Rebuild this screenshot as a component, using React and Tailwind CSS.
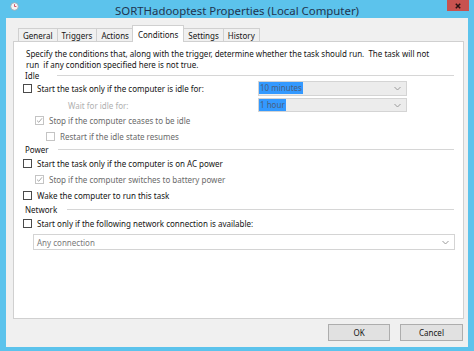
import React from 'react';

const font = { fontFamily: '"Noto Sans", "Open Sans", sans-serif' };

const Check = ({ checked, disabled }) => (
  <span
    className={`w-[9px] h-[9px] shrink-0 border bg-white flex items-center justify-center ${
      disabled ? 'border-[#c4c4c4]' : 'border-[#4a4a4a]'
    }`}
  >
    {checked && (
      <svg width="7" height="7" viewBox="0 0 7 7">
        <path d="M1 3.6 L2.8 5.3 L6 1.3" fill="none" stroke={disabled ? '#a8a8a8' : '#333'} strokeWidth="1" />
      </svg>
    )}
  </span>
);

const Chevron = () => (
  <svg width="7" height="5" viewBox="0 0 7 5">
    <path d="M0.5 1 L3.5 4 L6.5 1" fill="none" stroke="#9a9a9a" strokeWidth="1" />
  </svg>
);

const Row = ({ className = '', checked, disabled, label, children }) => (
  <div className={`h-[14px] flex items-center ${className}`}>
    <Check checked={checked} disabled={disabled} />
    <span className={`ml-[5px] whitespace-nowrap ${disabled ? 'text-[#6a6a6a]' : 'text-[#141414]'}`}>{label}</span>
    {children}
  </div>
);

const Section = ({ label, w, className = '' }) => (
  <div className={`flex items-center ${className}`}>
    <span className={`ml-[2px] ${w} text-[#141414]`}>{label}</span>
    <span className="flex-1 h-px bg-[#d6d6d6] mr-[9px]" />
  </div>
);

const IdleCombo = ({ value, h }) => (
  <div className={`ml-auto mr-[56px] w-[149px] ${h} border border-[#d4d4d4] bg-[#ececec] flex items-center`}>
    <span className="bg-[#3399ff] text-[#4a5f80] px-[1px] leading-[12px]">{value}</span>
    <span className="ml-auto mr-[5px] flex"><Chevron /></span>
  </div>
);

export default function App() {
  const tabs = ['General', 'Triggers', 'Actions', 'Conditions', 'Settings', 'History'];
  return (
    <div className="w-[474px] h-[351px] bg-[#5cc3ec] flex flex-col text-[8px] leading-[11px] overflow-hidden" style={font}>
      {/* title bar */}
      <div className="h-[18px] flex items-start relative shrink-0">
        <svg className="absolute left-[10px] top-[2px]" width="9" height="9" viewBox="0 0 9 9">
          <circle cx="4.5" cy="4.5" r="3.8" fill="#f4f4f4" stroke="#9aa6b0" strokeWidth="0.8" />
          <path d="M4.5 2.2 V4.5 H6.4" fill="none" stroke="#d0405a" strokeWidth="0.9" />
        </svg>
        <div className="flex-1 text-center text-[11.4px] leading-[14px] pt-[4px] text-[#1f3550]">
          SORTHadooptest Properties (Local Computer)
        </div>
        <div className="absolute left-[447px] top-0 w-[22px] h-[11px] bg-[#c8524f] flex items-center justify-center">
          <svg width="6" height="6" viewBox="0 0 6 6">
            <path d="M0.8 0.8 L5.2 5.2 M5.2 0.8 L0.8 5.2" stroke="#2a1212" strokeWidth="1.5" />
          </svg>
        </div>
      </div>

      {/* client */}
      <div className="mx-[6px] mb-[4px] flex-1 bg-[#f0f0f0] flex flex-col">
        <div className="pt-[7px] pl-[12px] flex items-end h-[23px] relative z-10">
          {tabs.map((t) =>
            t === 'Conditions' ? (
              <div
                key={t}
                className="h-[17px] -mb-px px-[5px] bg-white border border-b-0 border-[#d0d0d0] flex items-center text-[#141414] -mx-[1px]"
              >
                {t}
              </div>
            ) : (
              <div
                key={t}
                className="h-[13px] px-[4px] bg-[#f0f0f0] border border-b-0 border-[#d0d0d0] -mr-px flex items-center text-[#141414]"
              >
                {t}
              </div>
            )
          )}
        </div>

        <div className="ml-[7px] w-[451px] h-[278px] bg-white border border-[#d0d0d0] pl-[9px] pt-[6px]">
          <p className="pl-[3px] text-[#141414]">
            Specify the conditions that, along with the trigger, determine whether the task should run.&nbsp; The task will not
            <br />
            run&nbsp; if any condition specified here is not true.
          </p>

          <Section label="Idle" w="w-[32px]" className="h-[10px]" />
          <Row label="Start the task only if the computer is idle for:" className="h-[16px]">
            <IdleCombo value="10 minutes" h="h-[15px]" />
          </Row>
          <div className="h-[14px] mt-[2px] flex items-center">
            <span className="ml-[45px] text-[#b0b0b0]">Wait for idle for:</span>
            <IdleCombo value="1 hour" h="h-[14px]" />
          </div>
          <Row className="mt-[1px] ml-[12px]" checked disabled label="Stop if the computer ceases to be idle" />
          <Row className="mt-[2px] ml-[23px]" disabled label="Restart if the idle state resumes" />

          <Section label="Power" w="w-[33px]" className="h-[13px]" />
          <Row label="Start the task only if the computer is on AC power" />
          <Row className="mt-[2px] ml-[12px]" checked disabled label="Stop if the computer switches to battery power" />
          <Row className="mt-[2px]" label="Wake the computer to run this task" />

          <Section label="Network" w="w-[42px]" className="h-[13px] mt-[1px]" />
          <Row label="Start only if the following network connection is available:" />
          <div className="mt-[4px] ml-[10px] w-[422px] h-[16px] border border-[#d4d4d4] bg-white flex items-center">
            <span className="ml-[3px] text-[#7a7a7a]">Any connection</span>
            <span className="ml-auto mr-[5px] flex"><Chevron /></span>
          </div>
        </div>

        <div className="flex justify-end gap-[10px] mt-[5px] mr-[5px]">
          <button className="w-[62px] h-[17px] bg-[#e1e1e1] border border-[#adadad] text-[#141414] leading-[11px]">OK</button>
          <button className="w-[63px] h-[17px] bg-[#e1e1e1] border border-[#adadad] text-[#141414] leading-[11px]">Cancel</button>
        </div>
      </div>
    </div>
  );
}
